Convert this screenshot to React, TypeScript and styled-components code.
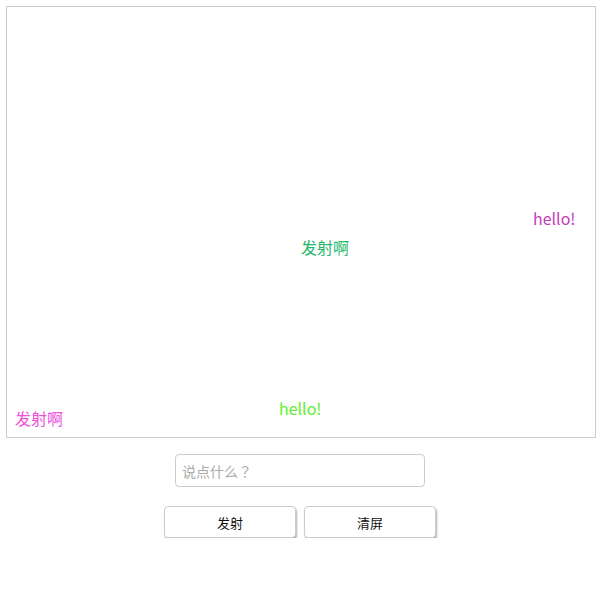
import React from "react";
import styled, { createGlobalStyle } from "styled-components";

const Global = createGlobalStyle`
  html, body { margin: 0; padding: 0; background: #fff; }
  body { font-family: "Noto Sans CJK SC", "Noto Sans", sans-serif; }
`;

const Page = styled.div`
  padding: 6px 4px 0 6px;
  display: flex;
  flex-direction: column;
  align-items: center;
`;

const Screen = styled.div`
  position: relative;
  box-sizing: border-box;
  width: 590px;
  height: 432px;
  border: 1px solid #ccc;
  overflow: hidden;
`;

const Bullet = styled.span<{ $c: string }>`
  position: absolute;
  white-space: nowrap;
  font-size: 16px;
  line-height: 20px;
  color: ${(p) => p.$c};
`;

const Input = styled.input`
  box-sizing: border-box;
  margin: 16px 2px 0 0;
  width: 250px;
  height: 33px;
  border: 1px solid #ccc;
  border-radius: 4px;
  padding: 0 6px;
  font-family: "Noto Sans CJK TC", sans-serif;
  font-size: 14px;
  outline: none;
  &::placeholder { color: #aaa; }
`;

const Buttons = styled.div`
  margin: 19px 2px 0 0;
  display: flex;
  gap: 8px;
`;

const Btn = styled.button`
  box-sizing: border-box;
  width: 132px;
  height: 32px;
  background: #fff;
  border: 1px solid #ccc;
  border-radius: 4px;
  box-shadow: 1px 2px 2px rgba(0,0,0,0.3);
  font-family: "Noto Sans CJK SC", sans-serif;
  font-size: 13px;
  color: #111;
  padding: 0;
`;

const bullets = [
  { t: "hello!", c: "#c43cb8", x: 526, y: 201 },
  { t: "发射啊", c: "#22b86a", x: 294, y: 230 },
  { t: "发射啊", c: "#ee50dc", x: 8, y: 401 },
  { t: "hello!", c: "#5cf02c", x: 272, y: 391 },
];

export default function App() {
  return (
    <>
      <Global />
      <Page>
        <Screen>
          {bullets.map((b, i) => (
            <Bullet key={i} $c={b.c} style={{ left: b.x, top: b.y }}>
              {b.t}
            </Bullet>
          ))}
        </Screen>
        <Input placeholder="说点什么？" />
        <Buttons>
          <Btn>发射</Btn>
          <Btn>清屏</Btn>
        </Buttons>
      </Page>
    </>
  );
}
